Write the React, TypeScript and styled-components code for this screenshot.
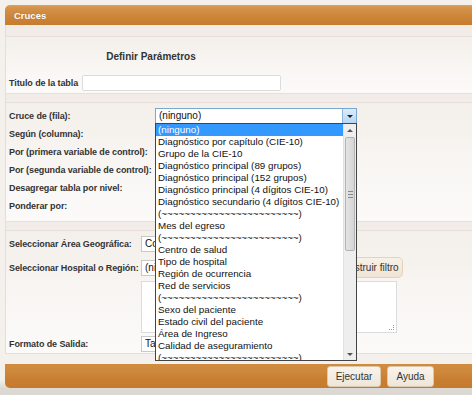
import React from 'react';
import styled, { createGlobalStyle } from 'styled-components';

const GlobalStyle = createGlobalStyle`
  html, body {
    margin: 0;
    padding: 0;
    background: #dedbd7;
    overflow: hidden;
  }
  body {
    font-family: 'Liberation Sans', Arial, sans-serif;
  }
`;

const Screen = styled.div`
  width: 472px;
  height: 395px;
  padding: 5px 0 0 5px;
  box-sizing: border-box;
  background: linear-gradient(#f4f1ed, #f4f1ed 380px, #dcd9d5 388px);
  overflow: hidden;
`;

const Window = styled.div`
  width: 480px;
  display: flex;
  flex-direction: column;
`;

const TitleBar = styled.div`
  height: 20px;
  border-radius: 5px 0 0 0;
  background: linear-gradient(#dfa05a 0px, #d3934a 3px, #cc8538 12px, #c77b2d 20px);
  color: #fff;
  font-weight: bold;
  font-size: 9.5px;
  line-height: 21px;
  padding-left: 9px;
  text-shadow: 0 0 1px rgba(120, 60, 10, 0.4);
`;

const Body = styled.div`
  border-left: 1px solid #e6ddd5;
  background: #f1ece7;
  padding-top: 11px;
  display: flex;
  flex-direction: column;
  gap: 8px;
`;

const Panel = styled.div<{ $h: number }>`
  position: relative;
  height: ${(p) => p.$h}px;
  box-sizing: border-box;
  border-top: 1px solid #e9dfd8;
  border-bottom: 1px solid #e9dfd8;
  background: linear-gradient(#f3efea, #faf8f6 70%, #fbfaf8);
`;

const Heading = styled.div`
  width: 290px;
  text-align: center;
  font-weight: bold;
  font-size: 10px;
  color: #333;
  padding-top: 14px;
  height: 23px;
`;

const Row = styled.div<{ $h?: number }>`
  display: flex;
  align-items: center;
  height: ${(p) => p.$h ?? 18}px;
`;

const Label = styled.label<{ $w: number }>`
  width: ${(p) => p.$w}px;
  flex: none;
  padding-left: 3px;
  box-sizing: border-box;
  font-weight: bold;
  font-size: 9px;
  color: #333;
  white-space: nowrap;
  letter-spacing: -0.1px;
`;

const TextInput = styled.div`
  width: 199px;
  height: 16px;
  box-sizing: border-box;
  background: #fff;
  border: 1px solid #dcdcdc;
  border-radius: 2px;
`;

const Grid = styled.div<{ $top: number }>`
  padding-top: ${(p) => p.$top}px;
  display: flex;
  flex-direction: column;
`;

const Select = styled.div<{ $w: number; $open?: boolean }>`
  width: ${(p) => p.$w}px;
  height: 16px;
  box-sizing: border-box;
  border: 1px solid ${(p) => (p.$open ? '#7aa7d6' : '#c9c9c9')};
  background: #fff;
  font-size: 10px;
  color: #111;
  padding-left: 3px;
  line-height: 14px;
  display: flex;
  justify-content: space-between;
  overflow: hidden;
  white-space: nowrap;
`;

const ArrowBtn = styled.span`
  width: 13px;
  height: 14px;
  flex: none;
  background: linear-gradient(#dcecfb, #b7d6f3);
  border-left: 1px solid #8fb6dd;
  display: flex;
  align-items: center;
  justify-content: center;
`;

const Tri = styled.span<{ $up?: boolean; $color?: string }>`
  width: 0;
  height: 0;
  border-left: 3px solid transparent;
  border-right: 3px solid transparent;
  ${(p) =>
    p.$up
      ? `border-bottom: 3px solid ${p.$color || '#222'};`
      : `border-top: 3px solid ${p.$color || '#222'};`}
`;

const List = styled.div`
  position: absolute;
  left: 149px;
  top: 20px;
  width: 202px;
  height: 238px;
  box-sizing: border-box;
  border: 1px solid #444;
  background: #fff;
  display: flex;
  z-index: 5;
  overflow: hidden;
`;

const Options = styled.div`
  flex: 1;
  display: flex;
  flex-direction: column;
`;

const Option = styled.div<{ $sel?: boolean }>`
  height: 12px;
  flex: none;
  line-height: 12px;
  font-size: 9.8px;
  padding-left: 2px;
  white-space: nowrap;
  color: ${(p) => (p.$sel ? '#fff' : '#111')};
  background: ${(p) => (p.$sel ? '#3399ff' : 'transparent')};
`;

const Scrollbar = styled.div`
  width: 12px;
  flex: none;
  background: #eeeeee;
  border-left: 1px solid #e2e2e2;
  display: flex;
  flex-direction: column;
`;

const ScrollArrow = styled.div`
  height: 12px;
  display: flex;
  align-items: center;
  justify-content: center;
`;

const Thumb = styled.div`
  height: 112px;
  margin: 1px 1px 0 1px;
  border: 1px solid #b3b3b3;
  border-radius: 2px;
  background: linear-gradient(90deg, #e4e4e4, #d5d5d5);
  display: flex;
  align-items: center;
  justify-content: center;
`;

const Grip = styled.div`
  width: 5px;
  height: 5px;
  border-top: 1px solid #888;
  border-bottom: 1px solid #888;
  position: relative;
  &::after {
    content: '';
    position: absolute;
    left: 0;
    right: 0;
    top: 2px;
    border-top: 1px solid #888;
  }
`;

const Track = styled.div`
  flex: 1;
`;

const FilterBtn = styled.div`
  margin-left: 61px;
  height: 21px;
  width: 71px;
  box-sizing: border-box;
  border: 1px solid #e3d3bd;
  border-radius: 5px;
  background: linear-gradient(#f8f1e7, #efe4d4);
  font-size: 10px;
  color: #333;
  line-height: 19px;
  text-align: center;
`;

const TextArea = styled.div`
  margin-left: 135px;
  width: 256px;
  height: 52px;
  box-sizing: border-box;
  background: #fff;
  border: 1px solid #dcdcdc;
  position: relative;
  &::after {
    content: '';
    position: absolute;
    right: 2px;
    bottom: 2px;
    width: 4px;
    height: 4px;
    border-right: 1px dotted #999;
    border-bottom: 1px dotted #999;
  }
`;

const Footer = styled.div`
  height: 24px;
  margin-top: 10px;
  border-radius: 0 0 0 5px;
  background: linear-gradient(#d08c40 0px, #cd883b 8px, #c97d31 16px, #c57a2e 24px);
  display: flex;
  align-items: center;
  padding-left: 322px;
  gap: 6px;
`;

const Button = styled.div<{ $w: number }>`
  width: ${(p) => p.$w}px;
  height: 21px;
  box-sizing: border-box;
  border: 1px solid #dcc8ab;
  border-radius: 3px;
  background: linear-gradient(#f8f3ec, #efe6da);
  font-size: 10px;
  color: #333;
  line-height: 19px;
  text-align: center;
`;

const tildes = '(' + '~'.repeat(24) + ')';

const options = [
  '(ninguno)',
  'Diagnóstico por capítulo (CIE-10)',
  'Grupo de la CIE-10',
  'Diagnóstico principal (89 grupos)',
  'Diagnóstico principal (152 grupos)',
  'Diagnóstico principal (4 dígitos CIE-10)',
  'Diagnóstico secundario (4 dígitos CIE-10)',
  tildes,
  'Mes del egreso',
  tildes,
  'Centro de salud',
  'Tipo de hospital',
  'Región de ocurrencia',
  'Red de servicios',
  tildes,
  'Sexo del paciente',
  'Estado civil del paciente',
  'Área de Ingreso',
  'Calidad de aseguramiento',
  tildes,
];

const crossLabels = [
  'Según (columna):',
  'Por (primera variable de control):',
  'Por (segunda variable de control):',
  'Desagregar tabla por nivel:',
  'Ponderar por:',
];

export default function App() {
  return (
    <>
      <GlobalStyle />
      <Screen>
        <Window>
          <TitleBar>Cruces</TitleBar>
          <Body>
            <Panel $h={58}>
              <Heading>Definir Parámetros</Heading>
              <Row>
                <Label $w={76}>Titulo de la tabla</Label>
                <TextInput />
              </Row>
            </Panel>

            <Panel $h={120}>
              <Grid $top={4}>
                <Row>
                  <Label $w={149}>Cruce de (fila):</Label>
                  <Select $w={202} $open>
                    <span>(ninguno)</span>
                    <ArrowBtn>
                      <Tri />
                    </ArrowBtn>
                  </Select>
                </Row>
                {crossLabels.map((l) => (
                  <Row key={l}>
                    <Label $w={149}>{l}</Label>
                  </Row>
                ))}
              </Grid>
              <List>
                <Options>
                  {options.map((o, i) => (
                    <Option key={i} $sel={i === 0}>
                      {o}
                    </Option>
                  ))}
                </Options>
                <Scrollbar>
                  <ScrollArrow>
                    <Tri $up $color="#555" />
                  </ScrollArrow>
                  <Thumb>
                    <Grip />
                  </Thumb>
                  <Track />
                  <ScrollArrow>
                    <Tri $color="#555" />
                  </ScrollArrow>
                </Scrollbar>
              </List>
            </Panel>

            <Panel $h={124}>
              <Grid $top={3}>
                <Row $h={20}>
                  <Label $w={135}>Seleccionar Área Geográfica:</Label>
                  <Select $w={200}>Costa Rica</Select>
                </Row>
                <Row $h={27}>
                  <Label $w={135}>Seleccionar Hospital o Región:</Label>
                  <Select $w={130}>(ninguno)</Select>
                  <FilterBtn>Construir filtro</FilterBtn>
                </Row>
                <TextArea />
                <Row $h={22}>
                  <Label $w={135}>Formato de Salida:</Label>
                  <Select $w={200}>Tabla</Select>
                </Row>
              </Grid>
            </Panel>
          </Body>
          <Footer>
            <Button $w={54}>Ejecutar</Button>
            <Button $w={47}>Ayuda</Button>
          </Footer>
        </Window>
      </Screen>
    </>
  );
}
